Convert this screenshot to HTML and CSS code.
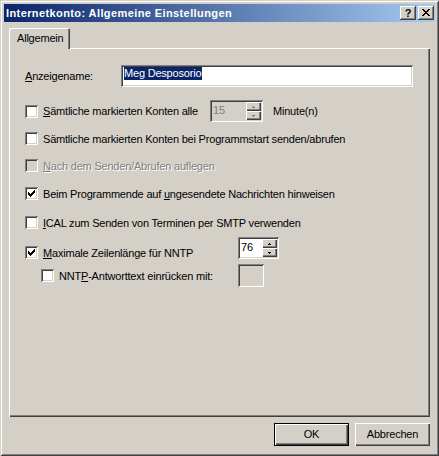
FILE: index.html
```html
<!DOCTYPE html>
<html>
<head>
<meta charset="utf-8">
<title>Internetkonto</title>
<link rel="stylesheet" href="styles.css">
</head>
<body>
<div class="window">
  <div class="titlebar">
    <span class="title">Internetkonto: Allgemeine Einstellungen</span>
    <div class="tbtns">
      <span class="tbtn help">?</span>
      <span class="tbtn close"><svg width="8" height="7" viewBox="0 0 8 7" shape-rendering="crispEdges"><path d="M0 0h2v1h-2zM6 0h2v1h-2zM1 1h2v1h-2zM5 1h2v1h-2zM2 2h4v1h-4zM3 3h2v1h-2zM2 4h4v1h-4zM1 5h2v1h-2zM5 5h2v1h-2zM0 6h2v1h-2zM6 6h2v1h-2z" fill="#000"/></svg></span>
    </div>
  </div>
  <div class="body">
    <div class="tabs"><div class="tab">Allgemein</div></div>
    <div class="panel">
      <div class="row name-row">
        <span class="lbl-name"><u>A</u>nzeigename:</span>
        <div class="field"><span class="sel">Meg Desposorio</span></div>
      </div>

      <div class="row r1">
        <div class="check w185"><span class="cb"></span><span><u>S</u>ämtliche markierten Konten alle</span></div>
        <div class="spin spin15 disabled">
          <span class="spin-val">15</span>
          <span class="spin-btns">
            <span class="sb"><svg width="5" height="2" viewBox="0 0 5 2" shape-rendering="crispEdges"><path d="M2 0h1v1h1v1H1V1h1z"/></svg></span>
            <span class="sb"><svg width="5" height="2" viewBox="0 0 5 2" shape-rendering="crispEdges"><path d="M1 0h3v1h-1v1h-1v-1h-1z"/></svg></span>
          </span>
        </div>
        <span class="unit">Minute(n)</span>
      </div>

      <div class="row r2">
        <div class="check"><span class="cb"></span><span>Sämtliche markierten Konten bei Programmstart senden/abrufen</span></div>
      </div>

      <div class="row r3">
        <div class="check dis"><span class="cb cb-dis"></span><span class="dtext"><u>N</u>ach dem Senden/Abrufen auflegen</span></div>
      </div>

      <div class="row r4">
        <div class="check"><span class="cb"><svg class="tick" width="7" height="7" viewBox="0 0 7 7" shape-rendering="crispEdges"><path d="M6 0h1v1h-1zM5 1h2v1h-2zM0 2h1v1h-1zM4 2h3v1h-3zM0 3h2v1h-2zM3 3h3v1h-3zM0 4h5v1h-5zM1 5h3v1h-3zM2 6h1v1h-1z"/></svg></span><span>Beim Programmende auf <u>u</u>ngesendete Nachrichten hinweisen</span></div>
      </div>

      <div class="row r5">
        <div class="check"><span class="cb"></span><span><u>I</u>CAL zum Senden von Terminen per SMTP verwenden</span></div>
      </div>

      <div class="row r6">
        <div class="check w213"><span class="cb"><svg class="tick" width="7" height="7" viewBox="0 0 7 7" shape-rendering="crispEdges"><path d="M6 0h1v1h-1zM5 1h2v1h-2zM0 2h1v1h-1zM4 2h3v1h-3zM0 3h2v1h-2zM3 3h3v1h-3zM0 4h5v1h-5zM1 5h3v1h-3zM2 6h1v1h-1z"/></svg></span><span><u>M</u>aximale Zeilenlänge für NNTP</span></div>
        <div class="spin spin76">
          <span class="spin-val">76</span>
          <span class="spin-btns">
            <span class="sb"><svg width="5" height="2" viewBox="0 0 5 2" shape-rendering="crispEdges"><path d="M2 0h1v1h1v1H1V1h1z"/></svg></span>
            <span class="sb"><svg width="5" height="2" viewBox="0 0 5 2" shape-rendering="crispEdges"><path d="M1 0h3v1h-1v1h-1v-1h-1z"/></svg></span>
          </span>
        </div>
      </div>

      <div class="row r7">
        <div class="check w197"><span class="cb"></span><span>NNT<u>P</u>-Antworttext einrücken mit:</span></div>
        <div class="smallbox"></div>
      </div>
    </div>
    <div class="buttons">
      <button class="btn default">OK</button>
      <button class="btn">Abbrechen</button>
    </div>
  </div>
</div>
</body>
</html>
```

FILE: styles.css
```css
html, body {
  margin: 0;
  padding: 0;
  background: #d4d0c8;
}
body {
  font-family: "Liberation Sans", Arial, sans-serif;
  font-size: 11px;
  letter-spacing: -0.2px;
  color: #000;
}
.window {
  width: 439px;
  height: 456px;
  box-sizing: border-box;
  padding: 4px;
  background: #d4d0c8;
  box-shadow: inset 1px 1px #d4d0c8, inset -1px -1px #404040, inset 2px 2px #fff, inset -2px -2px #808080;
  display: flex;
  flex-direction: column;
}
.titlebar {
  height: 18px;
  flex: none;
  display: flex;
  align-items: center;
  justify-content: space-between;
  padding: 0 1px 0 2px;
  background: linear-gradient(to right, #0a246a, #a6caf0);
}
.title {
  color: #fff;
  font-weight: bold;
  font-size: 11px;
  letter-spacing: 0.4px;
  white-space: nowrap;
}
.tbtns {
  display: flex;
  gap: 2px;
}
.tbtn {
  width: 16px;
  height: 14px;
  box-sizing: border-box;
  background: #d4d0c8;
  box-shadow: inset -1px -1px #404040, inset 1px 1px #fff, inset -2px -2px #808080;
  display: flex;
  align-items: center;
  justify-content: center;
}
.help {
  font-weight: bold;
  font-size: 11px;
  letter-spacing: 0;
  line-height: 14px;
  padding-bottom: 1px;
}
.close svg { display: block; margin-top: -1px; }
.body {
  flex: 1;
  display: flex;
  flex-direction: column;
  padding: 6px 5px 0 5px;
}
.tabs {
  display: flex;
  height: 20px;
}
.tab {
  width: 61px;
  height: 21px;
  box-sizing: border-box;
  padding-left: 8px;
  padding-bottom: 1px;
  display: flex;
  align-items: center;
  background: #d4d0c8;
  border-radius: 2px 2px 0 0;
  box-shadow: inset 1px 1px #fff, inset -1px 0 #404040, inset -2px 0 #808080;
  position: relative;
  z-index: 1;
}
.panel {
  height: 369px;
  flex: none;
  box-sizing: border-box;
  padding: 17px 0 0 16px;
  box-shadow: inset 1px 1px #fff, inset -1px -1px #404040, inset -2px -2px #808080;
}
.row {
  display: flex;
  align-items: center;
}
.name-row { height: 22px; }
.lbl-name { width: 96px; flex: none; }
.field {
  width: 292px;
  height: 22px;
  box-sizing: border-box;
  background: #fff;
  padding: 2px 3px 0 3px;
  box-shadow: inset 1px 1px #808080, inset -1px -1px #fff, inset 2px 2px #404040, inset -2px -2px #d4d0c8;
  display: flex;
  align-items: flex-start;
}
.sel {
  background: #0a246a;
  color: #fff;
  line-height: 13px;
  padding-right: 1px;
}
.check {
  display: flex;
  align-items: center;
  gap: 5px;
  height: 13px;
  white-space: nowrap;
  flex: none;
}
.w185 { width: 185px; }
.w213 { width: 213px; }
.w197 { width: 197px; }
.cb {
  width: 13px;
  height: 13px;
  box-sizing: border-box;
  flex: none;
  background: #fff;
  box-shadow: inset 1px 1px #808080, inset -1px -1px #fff, inset 2px 2px #404040, inset -2px -2px #d4d0c8;
  padding: 3px;
}
.cb-dis { background: #d4d0c8; }
.tick { display: block; fill: #000; }
.dtext {
  color: #808080;
  text-shadow: 1px 1px 0 #fff;
}
.r1 { margin-top: 13px; height: 22px; }
.r2 { margin-top: 10px; height: 13px; }
.r3 { margin-top: 14px; height: 13px; }
.r4 { margin-top: 15px; height: 13px; }
.r5 { margin-top: 16px; height: 13px; }
.r6 { margin-top: 8px; height: 22px; align-items: flex-end; }
.r7 { margin-top: 5px; height: 23px; padding-left: 16px; }
.spin {
  height: 22px;
  box-sizing: border-box;
  padding: 2px;
  background: #fff;
  box-shadow: inset 1px 1px #808080, inset -1px -1px #fff, inset 2px 2px #404040, inset -2px -2px #d4d0c8;
  display: flex;
  flex: none;
}
.spin15 { width: 53px; }
.spin76 { width: 41px; }
.spin.disabled { background: #d4d0c8; }
.spin-val {
  flex: 1;
  padding: 1px 0 0 1px;
  line-height: 14px;
}
.spin.disabled .spin-val { color: #808080; }
.spin-btns {
  width: 15px;
  display: flex;
  flex-direction: column;
}
.sb {
  flex: 1;
  background: #d4d0c8;
  box-shadow: inset 1px 1px #fff, inset -1px -1px #404040, inset -2px -2px #808080;
  display: flex;
  align-items: center;
  justify-content: center;
}
.sb svg { display: block; fill: #000; }
.spin.disabled .sb svg { fill: #808080; }
.unit { margin-left: 10px; }
.smallbox {
  width: 26px;
  height: 23px;
  box-sizing: border-box;
  background: #d4d0c8;
  box-shadow: inset 1px 1px #808080, inset -1px -1px #fff, inset 2px 2px #404040, inset -2px -2px #d4d0c8;
}
.buttons {
  display: flex;
  justify-content: flex-end;
  gap: 6px;
  margin-top: 6px;
}
.btn {
  width: 75px;
  height: 23px;
  border: none;
  margin: 0;
  padding: 0 0 1px 0;
  font-family: "Liberation Sans", Arial, sans-serif;
  font-size: 11px;
  letter-spacing: -0.2px;
  color: #000;
  background: #d4d0c8;
  box-shadow: inset 1px 1px #fff, inset -1px -1px #404040, inset -2px -2px #808080;
}
.btn.default {
  box-shadow: inset 0 0 0 1px #000, inset 2px 2px #fff, inset -2px -2px #404040, inset -3px -3px #808080;
}
```
